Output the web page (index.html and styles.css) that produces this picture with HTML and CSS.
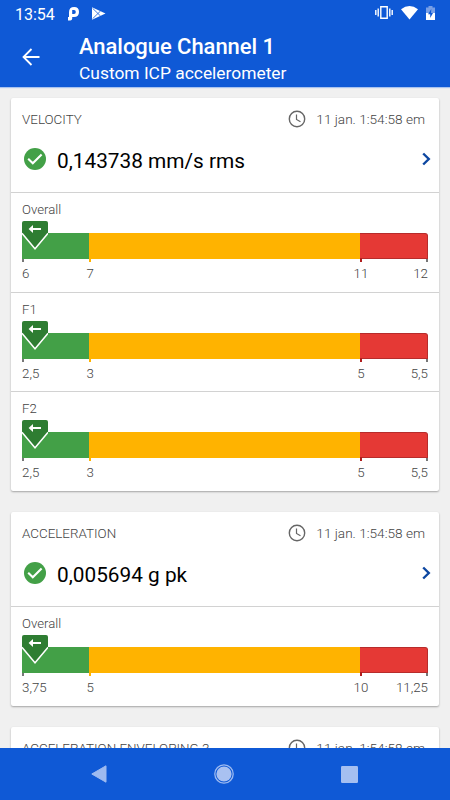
FILE: index.html
```html
<!DOCTYPE html>
<html lang="en">
<head>
<meta charset="utf-8">
<title>Analogue Channel 1</title>
<link rel="stylesheet" href="styles.css">
</head>
<body>
<svg class="defs" width="0" height="0">
  <symbol id="clock" viewBox="0 0 18 18"><circle cx="9" cy="9" r="7.7" fill="none" stroke="#666" stroke-width="1.4"/><path d="M8.5 4.5v5l4 2.3" fill="none" stroke="#666" stroke-width="1.2"/></symbol>
  <symbol id="check" viewBox="0 0 22 22"><circle cx="11" cy="11" r="11" fill="#43a047"/><path d="M4.2 10.8l4.6 4.5 8.8-8.7" fill="none" stroke="#fff" stroke-width="2.1"/></symbol>
  <symbol id="chevron" viewBox="0 0 9 14"><path d="M1.2 1.5L6.8 7l-5.6 5.5" fill="none" stroke="#0d47a1" stroke-width="2.4"/></symbol>
  <symbol id="marker" viewBox="0 0 26 30"><path d="M0 12.5L13 28.2 26 12.5V2q0-2-2-2H2Q0 0 0 2z" fill="#2e7d32"/><path d="M0 12.3L13 27.8 26 12.3" fill="none" stroke="#fff" stroke-width="1.4"/><path d="M11 4v3.1h8v1.8h-8V12L6.6 8z" fill="#fff"/></symbol>
</svg>
<div class="screen">
  <header class="header">
    <div class="status">
      <span class="time">13:54</span>
      <svg class="parking" width="12" height="14" viewBox="0 0 12 14"><path fill="#fff" fill-rule="evenodd" d="M1 7V5.2Q1 0 6.2 0 11 0 11 5q0 5-5 5H4.2v1.8Q4 13.5 2.3 13.5H0V10h1zM4.2 3.1v3.8H6q1.8 0 1.8-1.9T6 3.1z"/></svg>
      <svg class="play" width="14" height="13" viewBox="0 0 14 13"><path fill="#fff" d="M0 .3L13.5 6.5 0 12.7z"/><path d="M.5 1.2l8 7.8M.5 11.8l8-7.8" stroke="#0f59d6" stroke-width=".8"/></svg>
      <svg class="vibrate" width="18" height="13" viewBox="0 0 18 13"><path d="M5.8.8h6.4v11.4H5.8zM.8 4v5M3.2 2.5v8M14.8 2.5v8M17.2 4v5" fill="none" stroke="#fff" stroke-width="1.4"/></svg>
      <svg class="wifi" width="17" height="14" viewBox="0 0 17 14"><path fill="#fff" d="M0 3.2Q8.5-3 17 3.2L8.5 13.6z"/></svg>
      <svg class="battery" width="9" height="14" viewBox="0 0 9 14"><path fill="#789fe6" d="M2.5 0h4v1.4H9V7H0V1.4h2.5z"/><path fill="#fff" d="M0 7h9v7H0z"/><path fill="#0f59d6" d="M5.3 3L2 8.3h2.2V12L7 7H5z"/></svg>
    </div>
    <div class="titlebar">
      <svg class="back" width="18" height="18" viewBox="0 0 18 18"><path d="M17.5 9H1.5M9.5 1L1.5 9l8 8" fill="none" stroke="#fff" stroke-width="1.8"/></svg>
      <div class="titles">
        <h1>Analogue Channel 1</h1>
        <p>Custom ICP accelerometer</p>
      </div>
    </div>
  </header>

  <main class="content">
    <section class="card">
      <div class="summary">
        <div class="meta"><span class="name">VELOCITY</span><svg class="clock"><use href="#clock"/></svg><span class="date">11 jan. 1:54:58 em</span></div>
        <div class="value"><svg class="check"><use href="#check"/></svg><span class="reading">0,143738 mm/s rms</span><svg class="chevron"><use href="#chevron"/></svg></div>
      </div>
      <div class="gauge">
        <div class="label">Overall</div>
        <div class="bar"><i class="green"></i><i class="amber"></i><i class="red"></i><svg class="marker"><use href="#marker"/></svg></div>
        <div class="scale"><span>6</span><span>7</span><span>11</span><span>12</span></div>
      </div>
      <div class="gauge">
        <div class="label">F1</div>
        <div class="bar"><i class="green"></i><i class="amber"></i><i class="red"></i><svg class="marker"><use href="#marker"/></svg></div>
        <div class="scale"><span>2,5</span><span>3</span><span>5</span><span>5,5</span></div>
      </div>
      <div class="gauge">
        <div class="label">F2</div>
        <div class="bar"><i class="green"></i><i class="amber"></i><i class="red"></i><svg class="marker"><use href="#marker"/></svg></div>
        <div class="scale"><span>2,5</span><span>3</span><span>5</span><span>5,5</span></div>
      </div>
    </section>

    <section class="card">
      <div class="summary">
        <div class="meta"><span class="name">ACCELERATION</span><svg class="clock"><use href="#clock"/></svg><span class="date">11 jan. 1:54:58 em</span></div>
        <div class="value"><svg class="check"><use href="#check"/></svg><span class="reading">0,005694 g pk</span><svg class="chevron"><use href="#chevron"/></svg></div>
      </div>
      <div class="gauge">
        <div class="label">Overall</div>
        <div class="bar"><i class="green"></i><i class="amber"></i><i class="red"></i><svg class="marker"><use href="#marker"/></svg></div>
        <div class="scale"><span>3,75</span><span>5</span><span>10</span><span>11,25</span></div>
      </div>
    </section>

    <section class="card">
      <div class="summary">
        <div class="meta"><span class="name">ACCELERATION ENVELOPING 3</span><svg class="clock"><use href="#clock"/></svg><span class="date">11 jan. 1:54:58 em</span></div>
      </div>
    </section>
  </main>

  <nav class="nav">
    <svg width="16" height="18" viewBox="0 0 16 18"><path d="M15 .8v16.4L.8 9z" fill="#9dbaf0" stroke="#9dbaf0" stroke-linejoin="round"/></svg>
    <svg width="20" height="20" viewBox="0 0 20 20"><circle cx="10" cy="10" r="9.2" fill="none" stroke="#9dbaf0" stroke-width="1.3"/><circle cx="10" cy="10" r="7.6" fill="#a9c1f1"/></svg>
    <svg width="17" height="17" viewBox="0 0 17 17"><rect width="17" height="17" rx="1.2" fill="#a5bff1"/></svg>
  </nav>
</div>
</body>
</html>
```
FILE: styles.css
```css
* { box-sizing: border-box; }
body { margin: 0; font-family: Roboto, "Liberation Sans", sans-serif; }
.defs { display: block; height: 0; }
svg { flex: none; display: block; }
.screen { width: 450px; height: 800px; display: flex; flex-direction: column; overflow: hidden; background: #f0f0f0; }

.header { height: 87px; flex: none; background: #0f59d6; color: #fff; box-shadow: 0 1px 1px #a9c3ef; }
.status { display: flex; height: 28px; padding: 6px 15px 0; align-items: flex-start; }
.time { width: 53px; font-size: 16px; line-height: 17px; }
.parking { margin-top: 1px; }
.play { margin: 1px 0 0 12px; }
.vibrate { margin-left: auto; }
.wifi { margin-left: 8px; }
.battery { margin-left: 8px; }
.titlebar { display: flex; padding-left: 22px; }
.back { margin-top: 20px; }
.titles { margin-left: 39px; padding-top: 5px; }
h1 { margin: 0; font-size: 22px; line-height: 27px; font-weight: 500; letter-spacing: -.05px; }
.titles p { margin: 0; font-size: 17.4px; line-height: 26px; }

.content { flex: 1; min-height: 0; overflow: hidden; padding: 11px 11px 0; display: flex; flex-direction: column; gap: 21.5px; }
.card { flex: none; background: #fff; border-radius: 2px; box-shadow: 0 1px 2px rgba(0, 0, 0, .32); }
.summary { height: 94px; padding: 12px 11px 0; }
.meta { display: flex; align-items: center; height: 18px; padding-right: 3px; color: #444; font-size: 13.6px; font-weight: 300; }
.name { flex: 1; font-size: 13.4px; }
.clock { width: 18px; height: 18px; margin-right: 10px; }
.value { display: flex; align-items: center; height: 24px; margin-top: 19px; }
.check { width: 22px; height: 22px; margin-left: 2px; }
.reading { flex: 1; margin-left: 11px; padding-top: 4px; font-size: 20.8px; line-height: 24px; color: #000; }
.chevron { width: 9px; height: 14px; margin-right: -3px; }

.gauge { height: 99.5px; padding: 8px 11px 0; border-top: 1px solid #d2d2d2; color: #444; font-weight: 300; }
.label { height: 16px; line-height: 17px; font-size: 13.2px; }
.bar { position: relative; display: grid; grid-template-columns: 67px 271px 68px; height: 29px; margin-top: 16px; }
.bar i { height: 26px; position: relative; }
.bar i::after { content: ""; position: absolute; left: 0; top: 26px; width: 2px; height: 3px; background: inherit; }
.green { background: #43a047; }
.amber { background: #ffb300; }
.red { background: #e53935; border: 1px solid #b72c2b; border-left: 0; border-radius: 0 3px 0 0; }
.bar .green::after { background: #777; }
.bar .red::after { top: 24px; height: 4px; background: #b01e1e; }
.red::before { content: ""; position: absolute; right: -1px; top: 25px; width: 2px; height: 3px; background: #777; }
.marker { position: absolute; left: 0; top: -12px; width: 26px; height: 30px; }
.scale { display: grid; grid-template-columns: 64.5px 253.5px 42px 46px; margin-top: 4px; font-size: 13.3px; line-height: 15px; }
.scale span:nth-child(3) { text-align: center; }
.scale span:nth-child(4) { text-align: right; }

.nav { height: 52px; flex: none; display: flex; align-items: center; justify-content: space-between; padding: 0 92px 0 91px; background: #0f59d6; }
```
